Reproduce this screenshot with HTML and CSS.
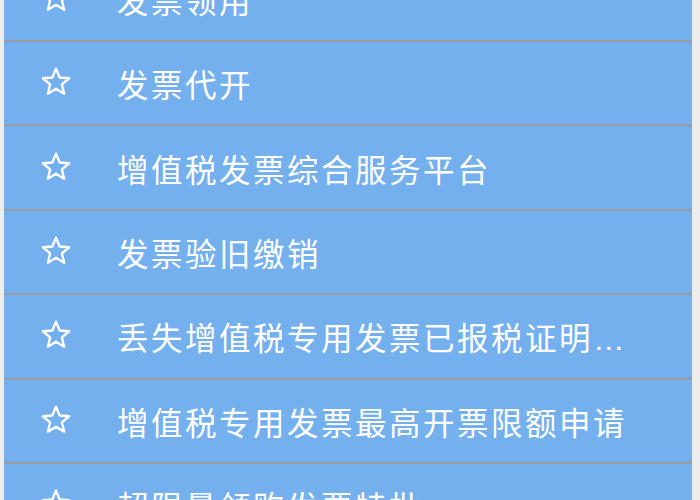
FILE: index.html
```html
<!DOCTYPE html>
<html lang="zh-CN">
<head>
<meta charset="utf-8">
<title>发票业务</title>
<link rel="stylesheet" href="styles.css">
</head>
<body>
<ul class="menu">
  <li class="item"><svg class="star" viewBox="0 0 30 30"><path d="M15 2.5 L18.41 10.81 L27.36 11.48 L20.52 17.29 L22.64 26.02 L15 21.3 L7.36 26.02 L9.48 17.29 L2.64 11.48 L11.59 10.81 Z"/></svg><span class="label">发票领用</span></li>
  <li class="item"><svg class="star" viewBox="0 0 30 30"><path d="M15 2.5 L18.41 10.81 L27.36 11.48 L20.52 17.29 L22.64 26.02 L15 21.3 L7.36 26.02 L9.48 17.29 L2.64 11.48 L11.59 10.81 Z"/></svg><span class="label">发票代开</span></li>
  <li class="item"><svg class="star" viewBox="0 0 30 30"><path d="M15 2.5 L18.41 10.81 L27.36 11.48 L20.52 17.29 L22.64 26.02 L15 21.3 L7.36 26.02 L9.48 17.29 L2.64 11.48 L11.59 10.81 Z"/></svg><span class="label">增值税发票综合服务平台</span></li>
  <li class="item"><svg class="star" viewBox="0 0 30 30"><path d="M15 2.5 L18.41 10.81 L27.36 11.48 L20.52 17.29 L22.64 26.02 L15 21.3 L7.36 26.02 L9.48 17.29 L2.64 11.48 L11.59 10.81 Z"/></svg><span class="label">发票验旧缴销</span></li>
  <li class="item"><svg class="star" viewBox="0 0 30 30"><path d="M15 2.5 L18.41 10.81 L27.36 11.48 L20.52 17.29 L22.64 26.02 L15 21.3 L7.36 26.02 L9.48 17.29 L2.64 11.48 L11.59 10.81 Z"/></svg><span class="label">丢失增值税专用发票已报税证明单开具</span></li>
  <li class="item"><svg class="star" viewBox="0 0 30 30"><path d="M15 2.5 L18.41 10.81 L27.36 11.48 L20.52 17.29 L22.64 26.02 L15 21.3 L7.36 26.02 L9.48 17.29 L2.64 11.48 L11.59 10.81 Z"/></svg><span class="label">增值税专用发票最高开票限额申请</span></li>
  <li class="item"><svg class="star" viewBox="0 0 30 30"><path d="M15 2.5 L18.41 10.81 L27.36 11.48 L20.52 17.29 L22.64 26.02 L15 21.3 L7.36 26.02 L9.48 17.29 L2.64 11.48 L11.59 10.81 Z"/></svg><span class="label">超限量领购发票特批</span></li>
</ul>
</body>
</html>
```

FILE: styles.css
```css
html, body {
  margin: 0;
  padding: 0;
  background: #ededed;
  overflow: hidden;
}

.menu {
  list-style: none;
  margin: -42.4px 0 0 4px;
  padding: 0;
  width: 688px;
  background: #74b0ee;
}

.item {
  box-sizing: border-box;
  height: 84.4px;
  padding-left: 36px;
  border-bottom: 2px solid #9b9b9b;
  display: flex;
  align-items: center;
  color: #ffffff;
  font-family: "Liberation Sans", "Noto Sans CJK SC", sans-serif;
}

.star {
  flex: none;
  width: 32px;
  height: 32px;
  margin-top: -2px;
  fill: none;
  stroke: #ffffff;
  stroke-width: 2.2;
  stroke-linejoin: round;
}

.label {
  margin-left: 45px;
  font-size: 31.5px;
  letter-spacing: 2.5px;
  width: 516px;
  white-space: nowrap;
  overflow: hidden;
  text-overflow: ellipsis;
}
```
